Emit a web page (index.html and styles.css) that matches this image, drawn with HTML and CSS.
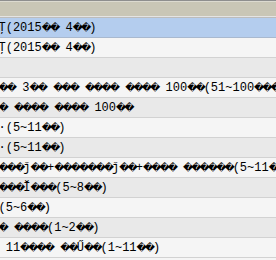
FILE: index.html
```html
<!DOCTYPE html>
<html>
<head>
  <title>List</title>
  <link rel="stylesheet" href="styles.css">
</head>
<body>
  <div class="list">
    <!-- column header -->
    <div class="header"></div>

    <div class="row selected">Ţ(2015<span class="q">��</span> 4<span class="q">��</span>)</div>
    <div class="row">Ţ(2015<span class="q">��</span> 4<span class="q">��</span>)</div>
    <div class="row alt"></div>
    <div class="row"><span class="q">��</span> 3<span class="q">��</span> <span class="q">���</span> <span class="q">����</span> <span class="q">����</span> 100<span class="q">��</span>(51~100<span class="q">����</span>)</div>
    <div class="row alt"><span class="q">�</span> <span class="q">����</span> <span class="q">����</span> 100<span class="q">��</span></div>
    <div class="row">·(5~11<span class="q">��</span>)</div>
    <div class="row alt">·(5~11<span class="q">��</span>)</div>
    <div class="row"><span class="q">���</span>ǰ<span class="q">��</span>+<span class="q">�������</span>ǰ<span class="q">��</span>+<span class="q">����</span> <span class="q">������</span>(5~11<span class="q">��</span>)</div>
    <div class="row alt"><span class="q">���</span>Ĭ<span class="q">���</span>(5~8<span class="q">��</span>)</div>
    <div class="row">(5~6<span class="q">��</span>)</div>
    <div class="row alt"><span class="q">�</span> <span class="q">����</span>(1~2<span class="q">��</span>)</div>
    <div class="row"> 11<span class="q">����</span> <span class="q">��</span>Ű<span class="q">��</span>(1~11<span class="q">��</span>)</div>
  </div>
</body>
</html>
```

FILE: styles.css
```css
body {
  margin: 0;
  background-color: #f5f5f5;
  font-family: "Liberation Mono", "DejaVu Sans", monospace;
  font-size: 12px;
  color: #000;
}

.list {
  width: 276px;
  height: 260px;
  overflow: hidden;
}

.header {
  height: 15px;
  background-color: #c9c6b6;
  border-top: 1px solid #8e8e8e;
  border-bottom: 1px solid #e4e4e4;
  box-shadow: inset 0 1px 0 #dcdad0;
  margin-bottom: 1px;
  outline: 1px solid #bcbcbc;
}

.row {
  height: 19px;
  line-height: 19px;
  border-bottom: 1px solid #d2d2d2;
  background-color: #f5f5f5;
  white-space: pre;
  text-indent: -1.5px;
  overflow: hidden;
}

.row:first-of-type {
  margin-top: 1px;
}

.row.alt {
  background-color: #e9e9e9;
}

.row.selected {
  background-color: #b4cdee;
  border-bottom-color: #a9b9cf;
}

/* replacement glyphs, squeezed to the cell width of the mono font */
.q {
  font-family: "DejaVu Sans", sans-serif;
  font-size: 10px;
  letter-spacing: -2px;
}
```
